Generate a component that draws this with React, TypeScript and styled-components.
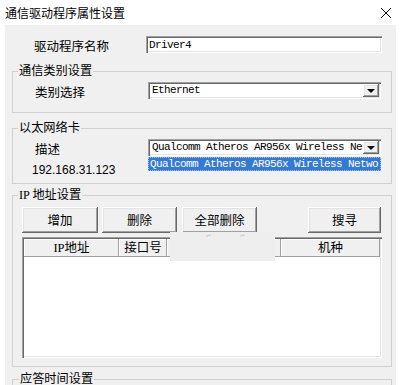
import React from "react";
import styled, { createGlobalStyle } from "styled-components";

const Global = createGlobalStyle`
  html, body { margin: 0; padding: 0; background: #ffffff; }
  body { width: 402px; height: 385px; overflow: hidden; }
  * { box-sizing: border-box; }
`;

const CJK = `"Noto Sans CJK SC", "Liberation Sans", sans-serif`;
const SERIF_CJK = `"Liberation Serif", "Noto Sans CJK SC", serif`;
const MONO = `"Liberation Mono", "Noto Sans CJK SC", monospace`;

const Window = styled.div`
  width: 402px;
  height: 385px;
  background: #ffffff;
  font-family: ${CJK};
  font-size: 12px;
  color: #000;
  overflow: hidden;
`;

const TitleBar = styled.div`
  height: 25px;
  display: flex;
  align-items: center;
  justify-content: space-between;
  padding: 0 10px 0 5px;
  font-size: 12px;
  line-height: 14px;
`;

const Client = styled.div`
  margin-left: 5px;
  width: 391px;
  height: 360px;
  background: #f0f0f0;
  padding: 0 4px 0 7px;
  display: flex;
  flex-direction: column;
  overflow: hidden;
`;

const Row = styled.div<{ $pad: number; $mt?: number }>`
  display: flex;
  align-items: center;
  padding-left: ${(p) => p.$pad}px;
  margin-top: ${(p) => p.$mt ?? 0}px;
  height: 17px;
`;

const Label = styled.div<{ $w: number }>`
  width: ${(p) => p.$w}px;
  flex: none;
  font-size: 12.5px;
  line-height: 17px;
  padding-top: 2px;
  white-space: nowrap;
`;

const sunken = `
  background: #ffffff;
  box-shadow: inset 1px 1px #a0a0a0, inset 2px 2px #696969,
    inset -1px -1px #ffffff, inset -2px -2px #e3e3e3;
`;

const raised = `
  background: #f0f0f0;
  box-shadow: inset -1px -1px #696969, inset 1px 1px #ffffff,
    inset -2px -2px #a0a0a0, inset 2px 2px #e3e3e3;
`;

const TextBox = styled.div<{ $w: number }>`
  ${sunken}
  width: ${(p) => p.$w}px;
  height: 17px;
  padding: 2px 3px 0 3px;
  font-family: ${MONO};
  font-size: 11px;
  letter-spacing: -0.6px;
  line-height: 14px;
  white-space: nowrap;
  overflow: hidden;
`;

const SelectBox = styled.div<{ $w: number }>`
  ${sunken}
  position: relative;
  width: ${(p) => p.$w}px;
  height: 17px;
  display: flex;
  align-items: center;
  padding: 2px 2px 2px 4px;
`;

const SelectText = styled.div`
  flex: 1;
  min-width: 0;
  font-family: ${MONO};
  font-size: 11px;
  letter-spacing: -0.6px;
  line-height: 13px;
  white-space: nowrap;
  overflow: hidden;
`;

const DropButton = styled.div`
  ${raised}
  width: 16px;
  height: 13px;
  flex: none;
  display: flex;
  align-items: center;
  justify-content: center;
`;

const Arrow = styled.div`
  width: 0;
  height: 0;
  border-left: 4px solid transparent;
  border-right: 4px solid transparent;
  border-top: 4px solid #000;
`;

const DropList = styled.div`
  position: absolute;
  left: 0;
  top: 18px;
  width: 100%;
  height: 14px;
  background: #3479d3;
  color: #ffffff;
  outline: 1px dotted #9cc4f0;
  outline-offset: -1px;
  padding-left: 2px;
  font-family: ${MONO};
  font-size: 11px;
  letter-spacing: -0.6px;
  line-height: 14px;
  white-space: nowrap;
  overflow: hidden;
`;

const Group = styled.div<{ $mt: number; $pt: number; $pb: number }>`
  position: relative;
  margin-top: ${(p) => p.$mt}px;
  border: 1px solid #d0d0d0;
  padding: ${(p) => p.$pt}px 10px ${(p) => p.$pb}px 0;
  display: flex;
  flex-direction: column;
`;

const Legend = styled.div<{ $left?: number }>`
  position: absolute;
  top: -8px;
  left: ${(p) => p.$left ?? 5}px;
  padding: 0 1px;
  background: #f0f0f0;
  font-family: ${SERIF_CJK};
  font-size: 12.2px;
  line-height: 14px;
  white-space: nowrap;
`;

const IpText = styled.div`
  margin-top: 7px;
  padding-left: 19px;
  height: 14px;
  font-family: "Liberation Sans", sans-serif;
  font-size: 12px;
  line-height: 14px;
`;

const ButtonRow = styled.div`
  display: flex;
  padding-left: 9px;
  height: 26px;
`;

const Button = styled.div<{ $w: number; $ml?: number; $auto?: boolean }>`
  ${raised}
  width: ${(p) => p.$w}px;
  height: 26px;
  margin-left: ${(p) => (p.$auto ? "auto" : `${p.$ml ?? 0}px`)};
  display: flex;
  align-items: center;
  justify-content: center;
  font-size: 12.5px;
  line-height: 14px;
`;

const ListView = styled.div`
  margin: 4px 0 0 9px;
  width: 360px;
  height: 121px;
  background: #ffffff;
  padding: 2px;
  box-shadow: inset 1px 1px #a0a0a0, inset 2px 2px #696969,
    inset -1px -1px #ffffff, inset -2px -2px #e3e3e3;
  display: flex;
  flex-direction: column;
`;

const Header = styled.div`
  display: flex;
  height: 18px;
`;

const HeaderCell = styled.div<{ $w: number }>`
  width: ${(p) => p.$w}px;
  flex: none;
  height: 18px;
  background: #f0f0f0;
  box-shadow: inset -1px -1px #a0a0a0, inset 1px 1px #ffffff;
  display: flex;
  align-items: center;
  justify-content: center;
  font-family: ${SERIF_CJK};
  font-size: 12.5px;
  line-height: 14px;
  white-space: nowrap;
`;

const Veil = styled.div`
  position: absolute;
  left: 157px;
  top: 36px;
  width: 105px;
  height: 29px;
  background: #eeeeee;
`;

const Smudge = styled.div<{ $x: number }>`
  position: absolute;
  left: ${(p) => p.$x}px;
  top: 3px;
  width: 5px;
  height: 1px;
  background: #c8c8c8;
  transform: rotate(-15deg);
`;

function CloseIcon() {
  return (
    <svg width="12" height="12" viewBox="0 0 12 12" style={{ display: "block" }}>
      <path d="M1 1 L11 11 M11 1 L1 11" stroke="#000" strokeWidth="1" fill="none" />
    </svg>
  );
}

export default function App() {
  return (
    <>
      <Global />
      <Window>
        <TitleBar>
          <span>通信驱动程序属性设置</span>
          <CloseIcon />
        </TitleBar>
        <Client>
          <Row $pad={22} $mt={11}>
            <Label $w={112}>驱动程序名称</Label>
            <TextBox $w={236}>Driver4</TextBox>
          </Row>

          <Group $mt={18} $pt={10} $pb={13}>
            <Legend>通信类别设置</Legend>
            <Row $pad={22}>
              <Label $w={113}>类别选择</Label>
              <SelectBox $w={234}>
                <SelectText>Ethernet</SelectText>
                <DropButton>
                  <Arrow />
                </DropButton>
              </SelectBox>
            </Row>
          </Group>

          <Group $mt={15} $pt={10} $pb={6}>
            <Legend>以太网络卡</Legend>
            <Row $pad={22}>
              <Label $w={113}>描述</Label>
              <SelectBox $w={234}>
                <SelectText>Qualcomm Atheros AR956x Wireless Ne</SelectText>
                <DropButton>
                  <Arrow />
                </DropButton>
                <DropList>Qualcomm Atheros AR956x Wireless Netwo</DropList>
              </SelectBox>
            </Row>
            <IpText>192.168.31.123</IpText>
          </Group>

          <Group $mt={11} $pt={11} $pb={8}>
            <Legend>IP 地址设置</Legend>
            <ButtonRow>
              <Button $w={76}>增加</Button>
              <Button $w={75} $ml={4}>删除</Button>
              <Button $w={75} $ml={5}>全部删除</Button>
              <Button $w={73} $auto>搜寻</Button>
            </ButtonRow>
            <ListView>
              <Header>
                <HeaderCell $w={95}>IP地址</HeaderCell>
                <HeaderCell $w={48}>接口号</HeaderCell>
                <HeaderCell $w={114} />
                <HeaderCell $w={99}>机种</HeaderCell>
              </Header>
            </ListView>
            <Veil>
              <Smudge $x={36} />
              <Smudge $x={70} />
            </Veil>
          </Group>

          <Group $mt={12} $pt={20} $pb={10}>
            <Legend $left={6}>应答时间设置</Legend>
          </Group>
        </Client>
      </Window>
    </>
  );
}
